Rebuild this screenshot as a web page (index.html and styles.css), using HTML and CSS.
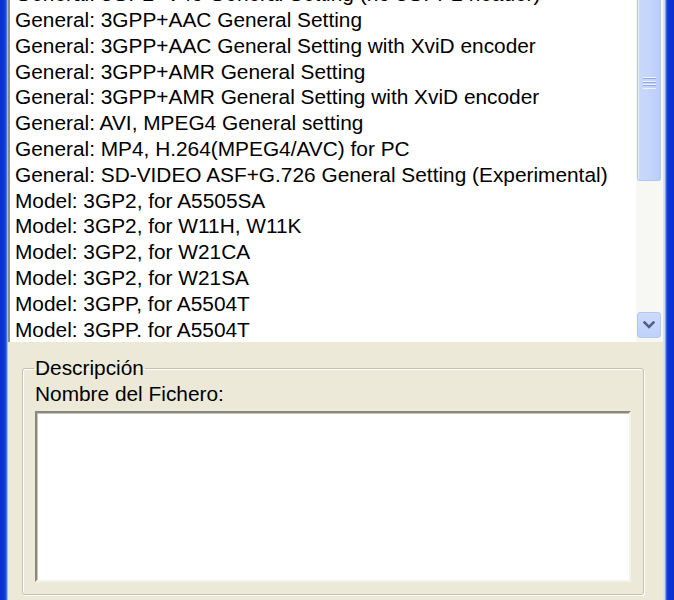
FILE: index.html
```html
<!DOCTYPE html>
<html lang="es">
<head>
<meta charset="utf-8">
<title>Perfiles</title>
<link rel="stylesheet" href="styles.css">
</head>
<body>
<div class="window">
  <div class="frame-left"></div>
  <div class="main">
    <div class="listbox">
      <ul class="items">
        <li>General: 3GP2+V49 General Setting (no 3GPP2 header)</li>
        <li>General: 3GPP+AAC General Setting</li>
        <li>General: 3GPP+AAC General Setting with XviD encoder</li>
        <li>General: 3GPP+AMR General Setting</li>
        <li>General: 3GPP+AMR General Setting with XviD encoder</li>
        <li>General: AVI, MPEG4 General setting</li>
        <li>General: MP4, H.264(MPEG4/AVC) for PC</li>
        <li>General: SD-VIDEO ASF+G.726 General Setting (Experimental)</li>
        <li>Model: 3GP2, for A5505SA</li>
        <li>Model: 3GP2, for W11H, W11K</li>
        <li>Model: 3GP2, for W21CA</li>
        <li>Model: 3GP2, for W21SA</li>
        <li>Model: 3GPP, for A5504T</li>
        <li>Model: 3GPP. for A5504T</li>
      </ul>
      <div class="scrollbar">
        <div class="thumb"><span class="grip"></span></div>
        <div class="track"></div>
        <div class="btn-down">
          <svg width="12" height="8" viewBox="0 0 12 8"><path d="M1.5 1.5 L6 6 L10.5 1.5" fill="none" stroke="#4d6185" stroke-width="2.6" stroke-linecap="square"/></svg>
        </div>
      </div>
    </div>
    <div class="panel">
      <fieldset class="group">
        <legend>Descripción</legend>
        <div class="label">Nombre del Fichero:</div>
        <div class="memo"></div>
      </fieldset>
    </div>
  </div>
  <div class="frame-right"></div>
</div>
</body>
</html>
```
FILE: styles.css
```css
html, body {
  margin: 0;
  padding: 0;
}
body {
  width: 674px;
  height: 600px;
  overflow: hidden;
  background: #ece9d8;
  font-family: "Liberation Sans", Arial, sans-serif;
  font-size: 20.85px;
  color: #000;
}
.window {
  display: flex;
  height: 600px;
}
.frame-left {
  width: 8px;
  flex: none;
  background: linear-gradient(to right, #0a2fc9 0, #0a36d8 4px, #1a55e8 6px, #6b8fe8 7px, #e4e2d6 8px);
}
.frame-right {
  width: 11px;
  flex: none;
  background: linear-gradient(to right, #e6e6dc 0, #c9d6f4 2px, #3a6ae6 3px, #0a36d8 5px, #0a30cc 11px);
}
.main {
  flex: 1;
  display: flex;
  flex-direction: column;
  min-width: 0;
}
.listbox {
  height: 342px;
  display: flex;
  background: #fff;
  border-left: 2px solid #8c8c86;
  overflow: hidden;
}
.items {
  list-style: none;
  margin: -18.8px 0 0 0;
  padding: 0;
  flex: 1;
  min-width: 0;
}
.items li {
  height: 25.8px;
  line-height: 25.8px;
  padding-left: 5px;
  white-space: nowrap;
}
.scrollbar {
  width: 27px;
  flex: none;
  display: flex;
  flex-direction: column;
  background: #f7f7f3;
  padding: 0 2px 4px 1px;
  box-sizing: border-box;
}
.thumb {
  height: 181px;
  flex: none;
  box-sizing: border-box;
  border: 1px solid #b3c6f3;
  border-top: none;
  border-radius: 0 0 3px 3px;
  background: linear-gradient(to right, #c9d8fc, #c3d4fb 60%, #b9ccf8);
  box-shadow: inset 1px 0 0 #e3ebfd;
  display: flex;
  justify-content: center;
  padding-top: 77px;
}
.grip {
  width: 13px;
  height: 12px;
  background: repeating-linear-gradient(to bottom, #eef3fe 0, #eef3fe 1px, #8ea9e4 1px, #8ea9e4 2px, transparent 2px, transparent 3.6px);
}
.track {
  flex: 1;
}
.btn-down {
  height: 26px;
  flex: none;
  box-sizing: border-box;
  border: 1px solid #b5c8f4;
  border-radius: 3px;
  background: linear-gradient(to bottom, #cddbfc, #bfd1fa);
  display: flex;
  align-items: center;
  justify-content: center;
}
.panel {
  flex: 1;
  padding: 15px 19px 0 14px;
}
.group {
  margin: 0;
  padding: 0 12px 12px 12px;
  border: 1px solid #c4c1b0;
  border-radius: 3px;
  box-shadow: inset 1px 1px 0 #fff, 1px 1px 0 #fff;
}
.group legend {
  padding: 0 1px;
  margin-left: -1px;
  line-height: 22px;
}
.label {
  line-height: 22px;
  margin-top: 4px;
}
.memo {
  margin-top: 6px;
  height: 171px;
  box-sizing: border-box;
  background: #fff;
  border-style: solid;
  border-width: 2px;
  border-color: #8a8878 #f4f3ec #f4f3ec #8a8878;
  box-shadow: inset 1px 1px 0 #c8c5b5;
}
```
